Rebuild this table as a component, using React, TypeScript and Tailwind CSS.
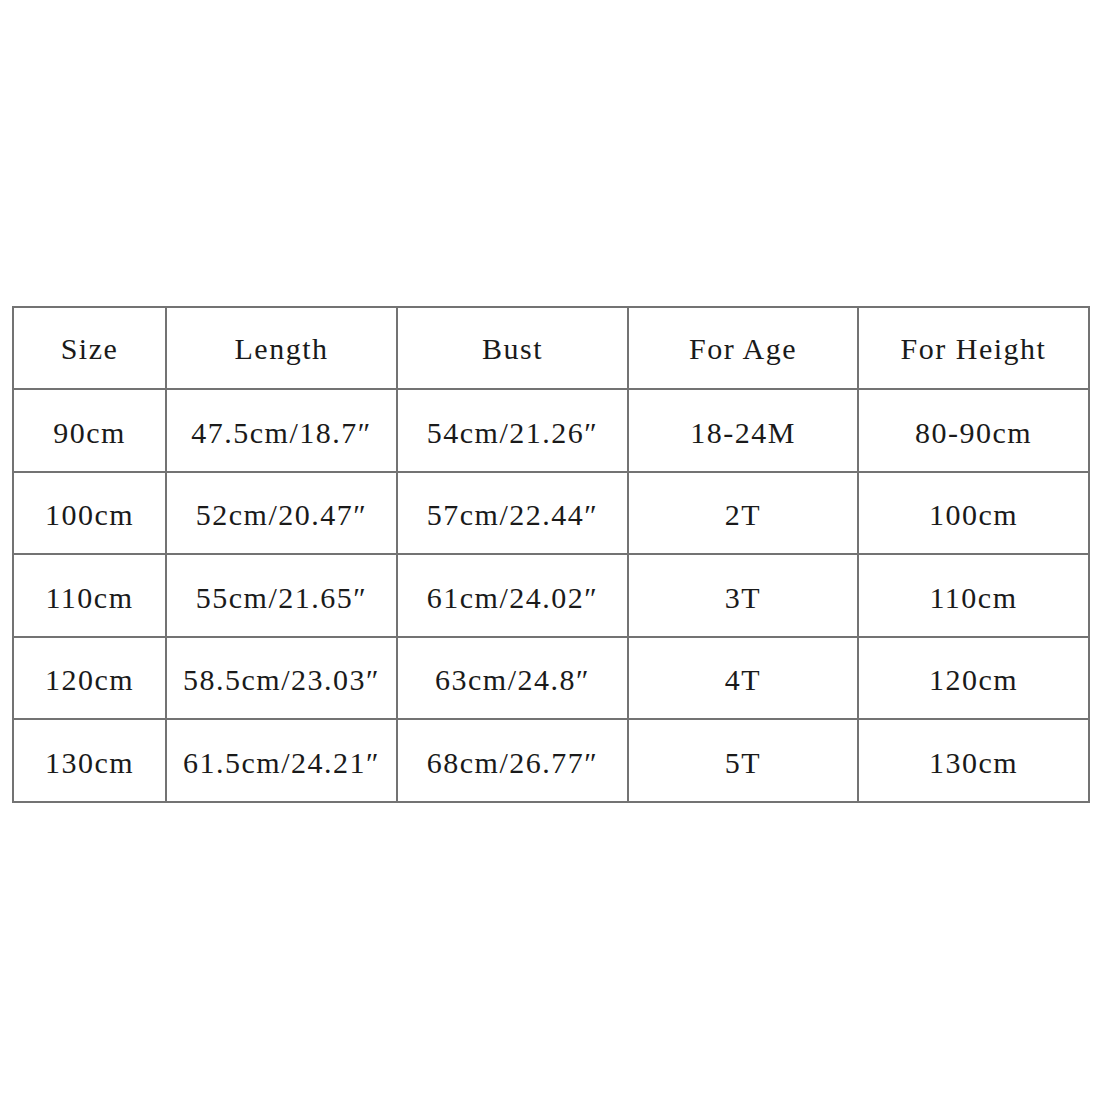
const headers = ["Size", "Length", "Bust", "For Age", "For Height"];

const rows = [
  ["90cm", "47.5cm/18.7″", "54cm/21.26″", "18-24M", "80-90cm"],
  ["100cm", "52cm/20.47″", "57cm/22.44″", "2T", "100cm"],
  ["110cm", "55cm/21.65″", "61cm/24.02″", "3T", "110cm"],
  ["120cm", "58.5cm/23.03″", "63cm/24.8″", "4T", "120cm"],
  ["130cm", "61.5cm/24.21″", "68cm/26.77″", "5T", "130cm"],
];

const colWidths = ["w-[153px]", "w-[231px]", "w-[231px]", "w-[230px]", "w-[231px]"];

export default function App() {
  return (
    <div className="h-[1100px] w-[1100px] bg-white px-[12px] pt-[306px] font-['Liberation_Serif',serif] text-[30px] tracking-[1.5px] text-[#1a1a1a]">
      <table className="w-[1076px] table-fixed border-collapse">
        <colgroup>
          {colWidths.map((w, i) => (
            <col key={i} className={w} />
          ))}
        </colgroup>
        <tbody>
          <tr className="h-[82px]">
            {headers.map((h) => (
              <td key={h} className="border-2 border-[#737373] text-center align-middle">
                {h}
              </td>
            ))}
          </tr>
          {rows.map((row) => (
            <tr key={row[0]} className="h-[82.5px]">
              {row.map((cell, i) => (
                <td key={i} className="border-2 border-[#737373] pt-[4px] text-center align-middle">
                  {cell}
                </td>
              ))}
            </tr>
          ))}
        </tbody>
      </table>
    </div>
  );
}
